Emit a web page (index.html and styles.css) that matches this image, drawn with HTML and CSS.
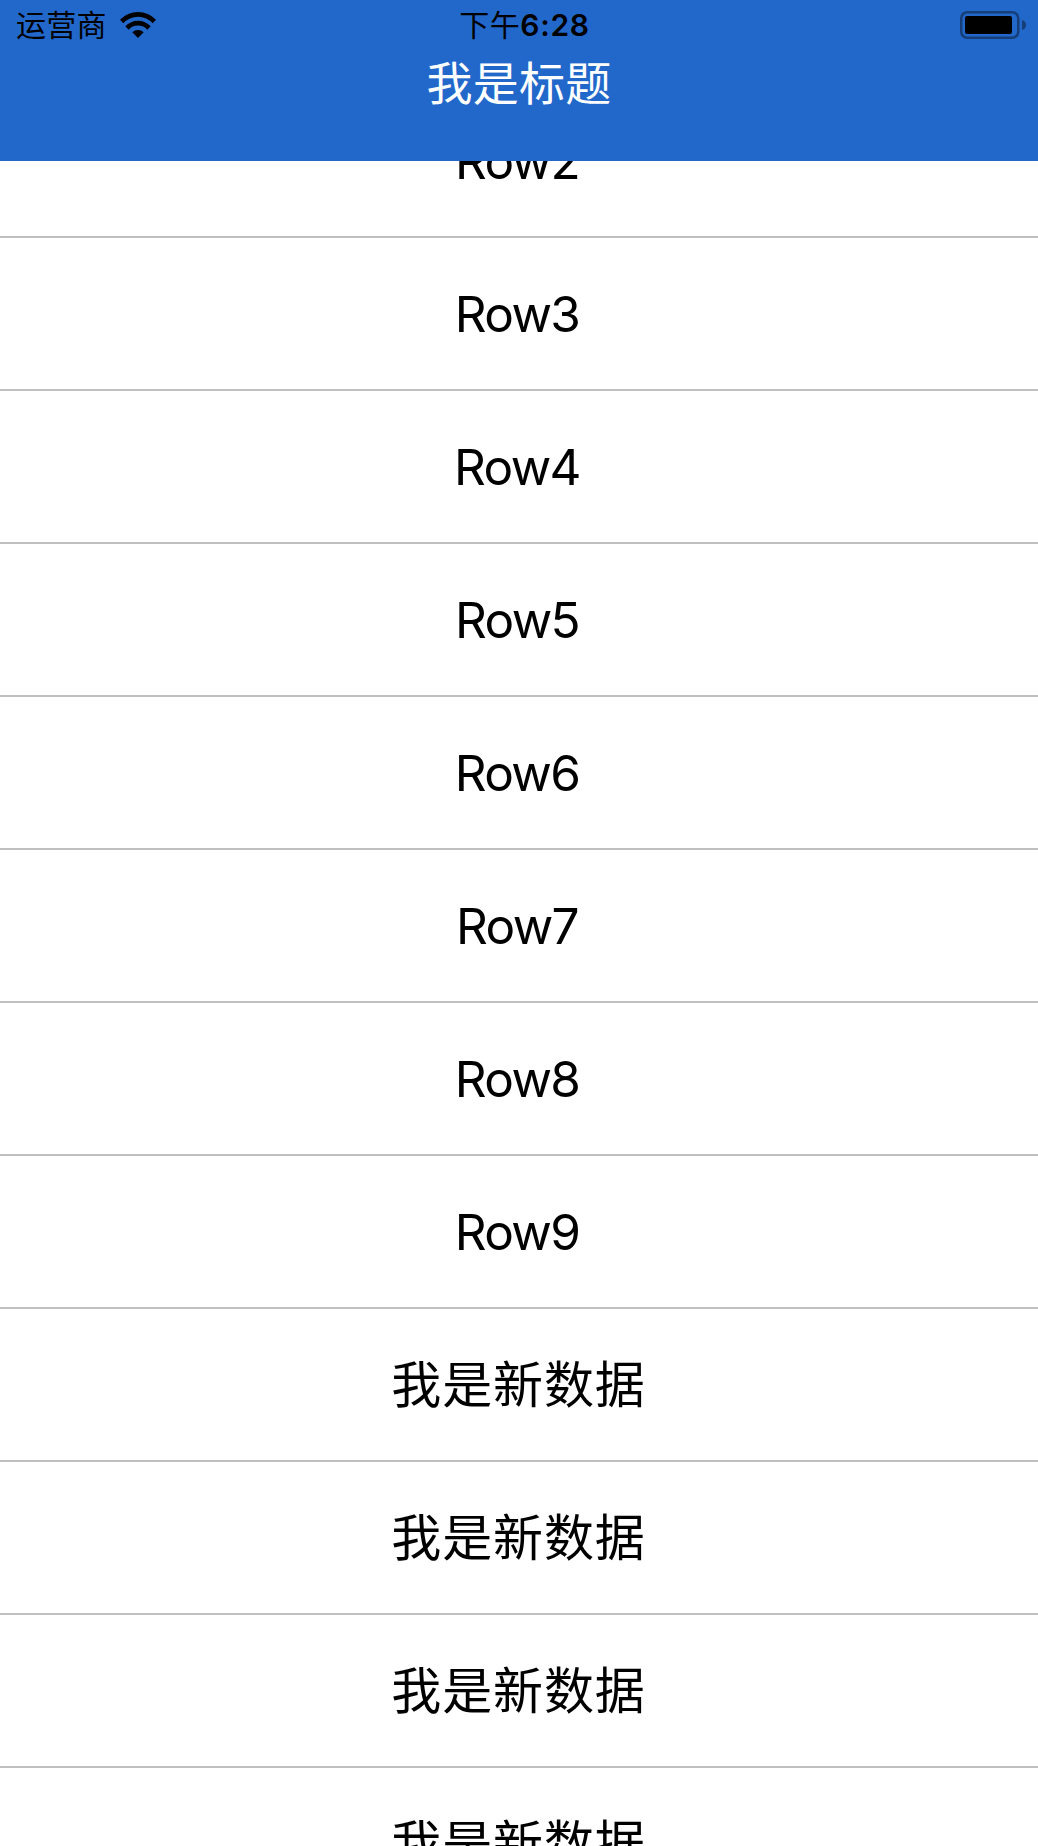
FILE: index.html
```
<!DOCTYPE html>
<html lang="zh-CN">
<head>
<meta charset="utf-8">
<title>我是标题</title>
<link rel="stylesheet" href="styles.css">
</head>
<body>
<header class="header">
  <div class="status">
    <div class="carrier"><span>运营商</span>
      <svg class="wifi" width="36" height="26" viewBox="0 0 36 26"><path d="M0 7.800A24.700 24.700 0 0 1 36 7.800L32.700 11.300A19.700 19.700 0 0 0 3.300 11.300ZM5.300 14.200A17.800 17.800 0 0 1 30.700 14.200L27.300 17.700A12.400 12.400 0 0 0 8.700 17.700ZM12.300 20.300A8.300 8.300 0 0 1 23.700 20.300L18 26Z"/></svg>
    </div>
    <div class="time">下午<span class="digits">6:28</span></div>
    <svg class="battery" width="66" height="28" viewBox="0 0 66 28"><rect x="1.250" y="1.250" width="57" height="25.500" rx="6" fill="none" stroke="#163f79" stroke-width="2.500"/><rect x="5" y="5" width="47" height="18" rx="2"/><path d="M62 9q4 1 4 5t-4 5z" fill="#163f79"/></svg>
  </div>
  <h1 class="title">我是标题</h1>
</header>
<main class="list">
  <div class="row">Row2</div>
  <div class="row">Row3</div>
  <div class="row">Row4</div>
  <div class="row">Row5</div>
  <div class="row">Row6</div>
  <div class="row">Row7</div>
  <div class="row">Row8</div>
  <div class="row">Row9</div>
  <div class="row cjk">我是新数据</div>
  <div class="row cjk">我是新数据</div>
  <div class="row cjk">我是新数据</div>
  <div class="row cjk">我是新数据</div>
</main>
</body>
</html>
```
FILE: styles.css
```
* { box-sizing: border-box; }
body { margin: 0; height: 1846px; overflow: hidden; display: flex; flex-direction: column; background: #fff; color: #000; font-family: Inter, "Noto Sans CJK SC", sans-serif; }
.header { flex: none; height: 161px; background: #2268cb; }
.status { display: grid; grid-template-columns: 1fr auto 1fr; align-items: center; height: 50px; padding: 0 12px 0 16px; }
.carrier { display: flex; align-items: center; gap: 13px; font-size: 30px; line-height: 50px; letter-spacing: 0.300px; }
.time { padding-left: 7px; font-size: 30px; font-weight: 400; letter-spacing: 0.500px; line-height: 50px; }
.digits { font-weight: 600; letter-spacing: 0.700px; }
.battery { justify-self: end; }
.title { margin: 0; color: #fff; font-size: 46px; font-weight: 400; letter-spacing: 0.300px; line-height: 67px; text-align: center; }
.list { flex: 1; min-height: 0; overflow: hidden; display: flex; flex-direction: column; }
.row { flex: none; height: 153px; border-bottom: 2px solid #bfbfbf; display: flex; align-items: center; justify-content: center; padding: 1px 4px 0 0; font-size: 49.500px; letter-spacing: -1.600px; }
.row:first-child { margin-top: -76px; }
.cjk { padding: 0 1px 8px 0; font-size: 50px; letter-spacing: 0.900px; }
```
